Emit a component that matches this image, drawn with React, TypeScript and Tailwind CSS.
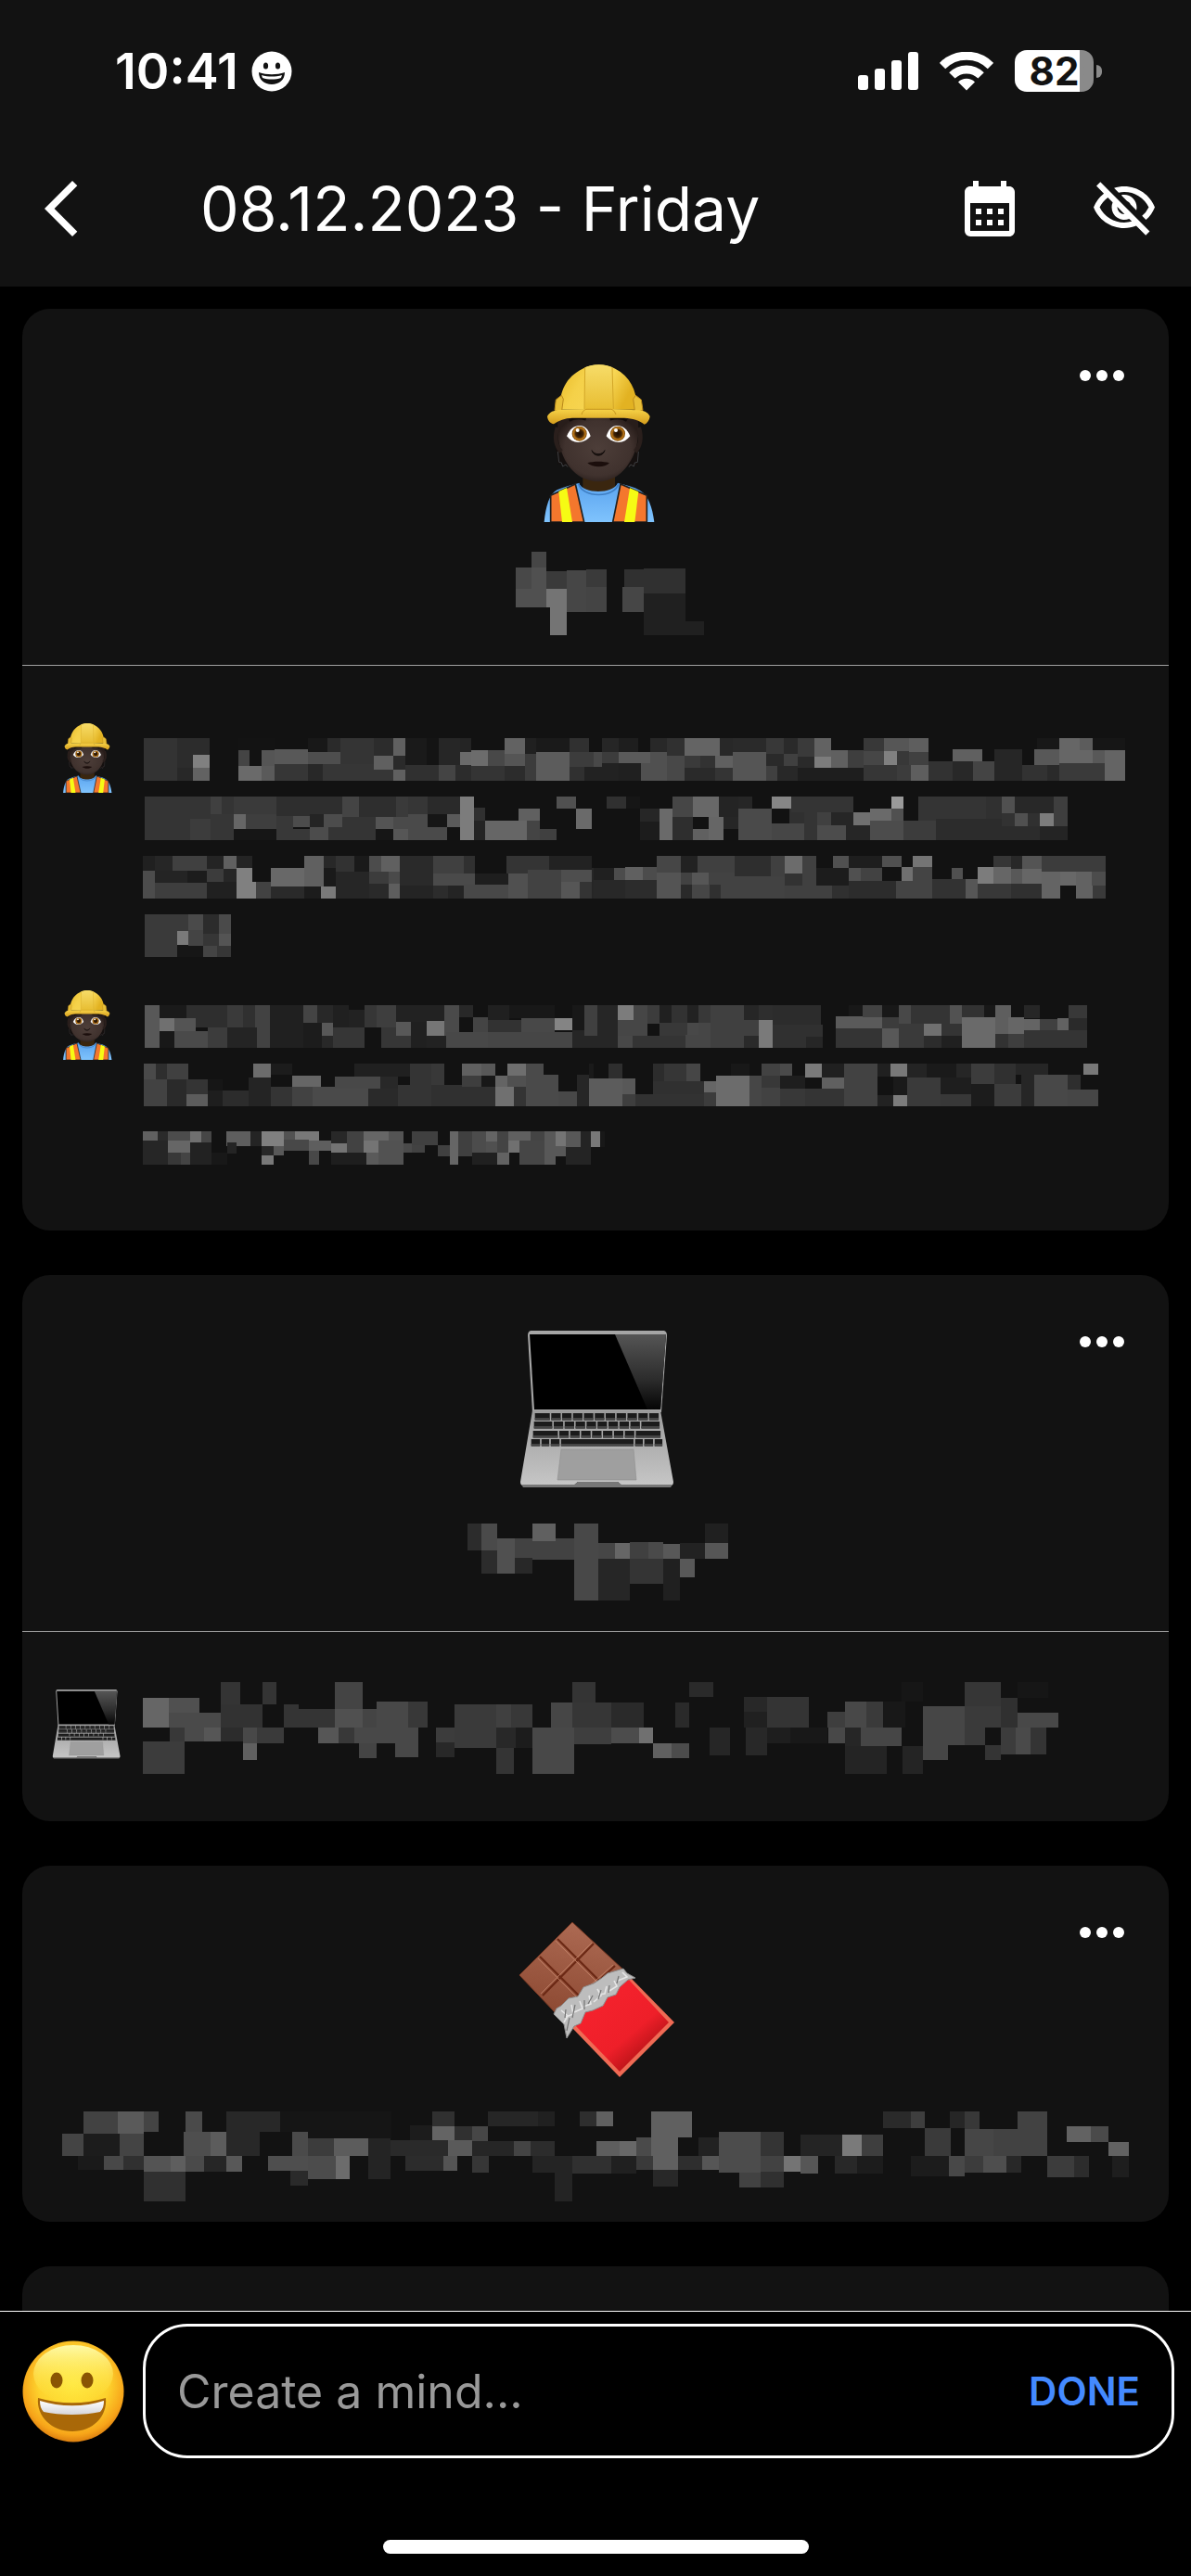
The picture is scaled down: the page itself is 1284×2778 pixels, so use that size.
import React, { useId } from 'react';
import { MdArrowBackIosNew, MdCalendarMonth, MdOutlineVisibilityOff } from 'react-icons/md';

/* ---------- Pixelated (censored) text ---------- */

// Cells are "x1 y1 x2 y2 grey", in the units of their part's grid.
type Part = { x: number; y: number; sx: number; cells: string };

function Mosaic({ viewBox, parts, className, label }: { viewBox: string; parts: Part[]; className: string; label: string }) {
  return (
    <svg viewBox={viewBox} className={className} shapeRendering="crispEdges" role="img" aria-label={label}>
      {parts.map((part, i) => (
        <g key={i} transform={`translate(${part.x} ${part.y}) scale(${part.sx} 0.33333)`}>
          {part.cells.split(';').map((cell, j) => {
            const [x1, y1, x2, y2, g] = cell.trim().split(' ');
            return <rect key={j} x={x1} y={y1} width={+x2 - +x1} height={+y2 - +y1} fill={`#${g}${g}${g}`} />;
          })}
        </g>
      ))}
    </svg>
  );
}

const NOTE_1_LEFT =
  '368 108 454 246 33;454 108 537 205 2c;454 205 494 246 28;494 162 537 205 80;494 205 537 246 62;611 108 703 148 13;611 148 639 198 44;611 198 670 246 6a;670 148 703 198 55;670 198 703 246 5a;703 144 789 192 58;789 153 872 192 4e;703 192 789 246 36;789 192 827 246 28;827 192 957 246 36;789 108 839 153 18;839 108 872 153 2a;872 108 957 192 34;957 108 1007 165 2c;957 165 1007 210 60;957 210 1007 246 36;1007 108 1038 165 60;1007 165 1038 210 2a;1007 210 1038 246 60;1038 108 1093 195 1a;1093 108 1124 195 14;1038 195 1124 246 30;1124 108 1178 195 26;1124 195 1166 246 44;1166 195 1207 246 2c;1178 108 1207 153 24;1178 153 1207 195 6a;1207 147 1250 198 6c;1207 198 1292 246 34;1250 147 1292 198 48;1292 108 1345 158 62;1292 158 1345 198 55;1292 198 1345 246 2c;1345 108 1373 158 20;1345 158 1373 246 3c;1373 108 1459 153 1a;1373 153 1459 246 5c;1459 108 1509 153 30;1459 153 1520 201 3c;1459 201 1497 246 30;1497 201 1520 246 22;' +
  '371 297 540 438 34;540 297 568 354 40;540 354 599 438 36;568 297 599 354 34;487 369 540 438 3c;599 297 708 354 3a;599 354 630 402 66;630 354 708 402 3e;599 402 708 438 16;708 297 877 360 2e;708 360 751 402 38;751 360 794 396 4c;794 354 829 396 24;829 354 877 396 4c;708 402 794 438 38;794 396 841 438 4c;841 396 962 438 34;877 297 919 363 44;877 363 962 396 34;919 297 1014 363 2e;1014 297 1045 363 3a;962 363 1007 402 54;1007 363 1045 402 4a;962 402 1007 438 16;1007 402 1045 438 56;1045 354 1095 438 4a;1045 297 1095 354 36;1095 297 1178 354 2a;1095 354 1145 396 16;1095 396 1145 438 4a;1145 354 1178 396 5a;1145 396 1178 438 12;1178 297 1214 438 7c;1214 333 1243 375 30;1214 375 1243 438 24;1243 375 1349 438 66;1328 336 1383 375 60;1349 375 1383 438 44;1383 402 1425 438 40;1425 297 1475 336 50;1475 336 1516 402 6a;' +
  '366 489 397 537 20;366 537 397 627 4c;397 489 442 537 26;397 537 480 576 24;480 537 530 576 1c;397 576 530 627 3e;442 489 530 537 40;530 489 573 531 24;530 531 573 573 3c;530 573 606 627 20;573 489 606 531 60;573 531 606 573 26;606 489 646 528 24;606 528 646 627 80;646 573 656 627 80;656 573 694 627 42;694 528 779 588 68;694 588 779 627 2a;779 489 829 588 60;779 588 822 627 1c;822 588 860 627 7a;829 489 860 528 28;829 528 860 588 1a;860 489 908 540 32;908 489 946 540 1a;860 540 946 627 26;946 489 976 540 4c;976 489 1024 540 60;946 540 995 579 3c;995 540 1024 579 4a;946 579 995 627 2a;995 579 1024 627 5e;1024 489 1109 585 2a;1024 585 1109 627 24;1109 489 1188 546 40;1188 489 1216 546 30;1109 546 1216 585 4a;1109 585 1147 627 2c;1147 585 1188 627 24;1188 582 1302 627 48;1216 546 1302 582 1e;1297 489 1406 546 34;1302 546 1352 627 50;1352 534 1437 627 42;1406 489 1516 534 22;1437 534 1516 573 4e;1437 573 1485 627 56;1485 573 1516 627 34;1516 528 1520 627 26;' +
  '371 678 482 816 3a;454 732 482 777 7a;454 777 520 816 16;482 678 520 729 4a;482 729 520 780 44;520 678 561 741 2c;520 741 561 780 36;520 780 556 816 44;561 678 592 741 4a;561 741 592 780 54;556 780 592 816 36';

const NOTE_1_RIGHT =
  '0 153 22 201 48;22 108 66 153 26;22 153 66 189 3c;66 108 117 153 1e;66 153 149 189 5a;0 201 66 246 22;22 189 124 201 22;66 189 124 246 20;124 189 192 246 50;149 108 192 153 28;149 153 192 189 50;192 108 239 165 30;192 165 239 246 48;239 108 331 165 64;239 165 280 204 3a;280 165 319 204 32;319 165 365 204 60;239 204 319 246 2a;319 204 365 246 34;331 108 365 165 28;365 108 453 153 2a;365 153 453 246 55;453 108 499 158 38;453 158 499 198 2a;453 198 482 246 40;482 198 536 246 28;499 108 536 158 2a;499 158 536 198 40;536 108 579 168 3a;536 168 579 204 2a;579 108 623 168 62;579 168 623 204 7c;623 147 667 204 60;667 147 709 204 3e;536 204 709 246 1e;709 108 762 150 38;709 150 762 195 46;762 108 828 150 56;762 150 796 195 80;828 108 879 153 5e;796 150 828 195 38;828 153 879 195 40;709 195 796 246 36;796 195 833 246 3c;833 195 879 246 5e;879 183 942 246 32;942 144 1020 183 60;942 183 996 246 28;996 183 1052 246 44;1052 144 1125 246 26;1125 195 1190 246 32;1190 195 1222 246 2a;1157 144 1222 195 58;1164 108 1222 144 18;1222 108 1275 189 66;1275 108 1310 147 5c;1275 147 1310 189 66;1310 147 1342 189 58;1342 147 1395 246 64;1222 189 1342 246 3a;1310 108 1395 147 16;' +
  '34 297 85 336 30;85 297 122 336 16;122 336 173 378 26;122 378 173 438 1c;173 336 207 438 6a;207 297 261 363 46;207 363 261 438 2e;261 297 329 363 68;302 363 341 438 66;261 402 302 438 60;329 297 380 363 24;341 363 380 402 26;380 297 416 336 26;380 336 467 438 4a;467 297 519 336 86;467 384 553 438 46;514 336 553 384 30;519 297 682 348 34;553 336 587 438 34;587 348 623 390 40;623 348 682 390 26;587 390 662 438 4c;662 390 726 438 26;682 348 726 390 70;726 336 782 375 6a;782 297 813 336 9a;782 336 813 375 50;726 375 813 438 4c;813 375 898 438 3c;852 297 1030 375 34;898 370 1170 438 2c;1030 297 1071 370 30;1071 297 1105 351 50;1071 351 1105 393 32;1105 351 1139 393 50;1105 297 1210 351 28;1139 351 1171 393 30;1171 351 1208 393 7c;1171 393 1244 438 24;1208 297 1244 393 3e;' +
  '0 528 54 567 20;54 528 83 567 4c;83 525 129 567 60;129 525 166 567 4c;0 567 83 627 28;83 567 166 627 2c;166 489 229 543 46;166 543 229 627 54;229 489 273 543 22;229 543 258 582 42;229 582 258 627 2a;258 543 302 582 56;258 582 304 627 46;273 489 370 543 40;302 543 370 582 42;304 582 334 627 30;334 555 502 627 42;370 489 465 555 2e;465 489 502 555 40;502 489 548 546 6c;502 546 548 585 32;548 489 584 585 40;502 585 626 627 40;584 528 670 585 1c;626 585 670 627 30;628 489 670 528 50;670 489 757 528 1e;670 528 701 570 50;701 528 757 570 42;670 570 794 627 2c;757 489 808 525 50;808 525 838 570 70;838 489 889 525 74;838 525 889 627 44;794 570 838 627 44;889 564 976 627 32;940 528 969 564 50;976 564 1008 627 56;1008 525 1049 579 7c;1049 489 1096 525 36;1049 525 1096 579 66;1096 489 1125 531 28;1096 531 1125 579 58;1125 489 1176 531 54;1125 531 1176 579 66;1008 579 1096 627 38;1096 579 1176 627 30;1176 489 1344 543 3c;1176 540 1225 627 64;1225 540 1266 585 68;1266 540 1310 627 62;1307 540 1344 585 4c;1310 585 1344 627 3a';

const NOTE_2_LEFT =
  '371 102 409 240 58;409 144 447 186 70;409 102 478 144 1a;447 144 501 186 54;409 186 447 240 18;447 186 532 240 4a;478 102 582 144 2e;501 144 582 174 2e;532 174 582 240 3c;582 102 622 174 3a;622 102 653 174 30;653 102 691 240 42;582 174 658 240 24;691 102 777 240 20;777 102 813 159 44;813 102 853 159 28;777 159 824 240 1c;824 159 853 201 58;824 201 853 240 28;853 102 893 174 20;853 174 934 240 36;893 118 934 174 22;934 102 965 174 36;965 102 1014 174 3e;976 174 1014 240 36;1014 102 1138 156 22;1014 156 1052 201 58;1014 201 1052 240 36;1052 156 1093 240 20;1093 153 1140 201 76;1093 201 1143 240 22;1138 102 1176 201 4a;1143 189 1250 240 48;1176 102 1212 141 28;1212 141 1250 189 44;1250 102 1304 150 20;1250 150 1335 189 32;1304 102 1421 144 18;1335 144 1421 189 48;1250 189 1466 240 46;1421 144 1466 183 84;1466 183 1520 240 26;1466 102 1497 183 18;1497 102 1520 201 40;' +
  '368 291 399 342 4a;399 291 428 342 2e;428 291 482 342 40;368 342 428 429 42;428 342 478 429 2a;478 342 532 390 34;478 390 532 429 5c;532 342 570 378 16;532 378 570 429 1e;570 378 637 429 2c;637 336 694 429 24;649 291 694 336 6c;694 291 748 327 1c;694 366 748 429 34;748 330 822 366 66;748 366 801 429 42;801 366 943 429 4a;858 333 974 372 48;908 291 1050 333 20;974 333 1019 372 28;943 372 1019 429 2a;1019 360 1104 429 34;1050 291 1104 360 34;1104 291 1138 360 38;1104 360 1269 429 30;1183 291 1233 330 60;1233 291 1269 330 58;1183 330 1233 366 3e;1233 330 1269 366 18;1269 330 1300 366 64;1269 366 1316 429 70;1300 291 1347 330 6e;1300 330 1347 366 50;1316 366 1347 429 34;1347 291 1392 429 4a;1392 327 1430 429 4a;1430 381 1478 429 48;1478 327 1509 429 26;1509 291 1520 339 1a;1509 339 1520 429 5c;' +
  '366 510 404 540 60;404 510 430 540 2a;366 540 430 618 26;430 510 487 540 4c;430 540 487 579 66;430 579 463 618 38;463 579 487 618 44;487 510 516 546 70;516 510 542 546 46;487 546 542 618 22;542 579 582 618 18;580 510 641 558 5e;582 546 606 582 24;641 510 670 558 24;670 510 727 558 80;670 558 701 588 28;670 588 701 618 78;701 558 727 588 58;727 510 755 537 52;755 510 817 540 78;727 537 791 573 48;791 540 848 573 5e;791 573 817 618 48;848 510 889 549 28;848 549 889 579 74;848 579 938 618 1e;889 510 931 579 42;931 510 995 540 66;931 540 969 579 74;938 579 969 618 5a;969 540 1033 618 52;995 510 1033 540 54;1033 549 1055 579 4a;1055 510 1121 555 40;1055 555 1088 579 42;1121 555 1152 591 40;1152 510 1174 618 66;1174 510 1209 591 40;1209 510 1245 579 4c;1209 579 1273 618 20;1245 510 1273 543 64;1245 543 1273 579 50;1273 510 1302 579 44;1273 579 1304 618 62;1302 510 1359 540 60;1302 540 1330 579 70;1330 540 1395 618 46;1359 510 1395 540 44;1395 510 1423 618 58;1423 510 1449 558 74;1423 558 1449 591 58;1449 510 1487 561 58;1449 561 1513 618 24;1487 510 1513 561 24;1513 510 1537 561 78;1537 510 1550 561 18';

const NOTE_2_RIGHT =
  '0 102 10 201 40;0 201 10 240 26;10 102 63 240 26;63 102 105 150 7c;105 102 141 201 46;63 150 141 201 46;63 201 102 240 48;102 201 241 240 34;141 102 173 162 3c;173 102 205 159 20;205 102 246 159 32;246 102 275 159 22;173 159 246 201 38;246 159 275 201 48;241 198 275 240 46;275 102 307 159 38;275 159 307 240 46;307 102 394 240 40;394 102 433 150 26;394 150 433 201 40;394 201 433 240 2a;433 102 470 150 2e;433 150 470 240 7a;470 102 597 165 2c;470 165 601 240 30;558 204 601 240 26;635 138 757 177 5a;706 102 757 141 42;670 102 706 138 18;635 177 757 240 34;757 102 801 141 18;757 141 801 177 3c;757 177 801 240 58;801 102 833 162 48;833 102 935 162 34;801 162 867 240 3a;867 162 913 201 70;867 201 913 240 2c;913 162 967 201 34;913 201 967 240 20;935 102 967 162 52;967 102 1025 141 32;967 141 1054 240 6a;1025 102 1054 141 18;1054 102 1096 195 5e;1088 141 1130 195 66;1054 195 1088 240 32;1088 195 1130 240 3e;1130 102 1170 144 26;1130 147 1170 183 64;1130 183 1295 240 34;1170 147 1217 183 40;1217 144 1247 183 62;1247 102 1295 144 38;1247 144 1295 183 2a;' +
  '0 339 75 429 5c;39 291 75 339 2e;75 339 110 390 58;75 390 110 429 3e;110 390 290 429 32;156 291 186 348 2c;156 348 290 390 30;186 291 243 348 36;243 291 280 348 46;290 348 321 384 66;290 384 321 429 3c;321 330 409 429 6c;409 330 441 429 46;360 291 409 330 18;441 291 489 330 42;441 330 489 369 38;489 291 521 330 4a;489 330 555 372 1e;441 369 489 429 42;489 372 555 429 38;555 291 599 336 7a;599 291 657 336 20;599 336 657 372 60;555 372 657 429 34;657 291 745 429 42;745 291 779 333 20;779 291 823 333 78;786 333 823 393 1a;745 393 786 429 22;786 393 823 429 7c;823 291 874 336 24;823 336 911 429 3a;874 291 952 336 1a;911 336 991 390 1e;911 390 991 429 38;952 291 991 336 26;991 291 1052 357 3c;991 357 1052 429 1c;1052 291 1108 357 30;1052 357 1122 429 3c;1108 291 1193 327 26;1122 327 1157 429 26;1157 327 1244 429 48;1244 327 1278 375 2e;1244 375 1325 429 46;1286 291 1325 327 78';

const NOTE_3 =
  '188 153 222 249 66;222 153 263 201 50;222 201 291 249 4a;291 102 316 174 34;291 174 346 249 32;346 102 364 174 34;374 174 393 249 34;393 189 441 249 34;441 102 477 189 44;441 189 477 249 50;477 189 496 249 44;496 165 537 249 48;537 165 563 249 38;223 249 243 294 38;243 249 269 294 4a;269 249 291 294 56;291 249 320 294 2c;320 249 338 300 48;338 249 374 300 3a;188 294 243 399 3c;320 300 338 354 60;419 249 446 300 56;446 249 466 300 38;466 249 520 300 48;473 300 496 348 44;520 249 551 345 48;574 249 598 297 3c;574 297 598 345 28;598 174 653 315 3a;653 174 673 249 40;673 174 701 249 38;653 249 679 315 28;679 249 701 315 1c;653 315 677 399 34;701 249 756 399 48;725 168 753 249 46;753 102 784 168 34;753 168 805 249 36;805 168 848 249 2a;756 249 805 303 3e;805 249 841 300 4c;841 249 860 300 70;860 300 884 348 60;884 300 907 348 4c;889 168 907 249 2a;907 102 939 150 2a;934 249 961 339 26;979 150 1010 198 28;979 198 1010 249 20;982 249 1010 339 28;1010 150 1065 249 34;1010 249 1040 300 1e;1040 249 1089 300 18;1089 198 1112 249 3e;1091 249 1112 300 48;1112 165 1141 249 48;1141 165 1163 249 3a;1163 165 1192 249 18;1187 102 1215 165 16;1112 249 1133 309 26;1133 249 1187 309 46;1112 309 1167 399 24;1188 309 1215 399 24;1215 180 1248 354 46;1248 180 1270 306 46;1270 102 1318 180 36;1270 180 1297 306 3a;1297 180 1318 249 3a;1318 153 1340 249 30;1340 201 1393 249 48;1340 102 1380 153 16;1297 306 1318 354 34;1318 249 1337 336 3c;1337 249 1357 336 4a;1357 249 1377 336 34';

const TITLE_1 =
  '99 675 147 726 46;48 726 99 795 48;99 726 147 855 50;48 795 99 855 50;147 738 213 795 3a;147 795 213 855 74;159 855 213 945 74;213 735 276 870 46;276 732 342 789 3a;276 789 342 870 44;399 732 462 789 30;393 789 462 870 46;462 729 597 810 30;462 810 597 945 20;597 900 657 945 20';

const TITLE_2 =
  '47 819 76 906 2c;76 819 109 906 4a;76 906 109 981 2c;109 867 146 981 50;146 867 271 936 42;146 930 183 981 28;183 819 232 876 60;271 819 322 1068 48;322 882 357 933 46;357 882 388 933 66;322 933 388 1068 26;388 879 427 933 40;427 879 458 933 4a;388 933 458 1014 34;458 885 493 933 58;458 933 493 1068 20;493 882 546 933 22;493 933 525 993 58;546 819 595 882 20;546 882 595 933 56';

const TITLE_3 =
  '110 111 155 183 42;155 111 189 183 5a;189 111 209 178 44;82 183 110 255 44;110 183 158 255 1c;158 183 189 255 44;103 255 137 300 1a;137 255 162 300 48;162 255 189 300 30;189 255 225 306 54;225 255 244 306 5e;189 306 244 402 30;244 111 266 177 4a;242 177 277 255 4e;277 177 298 255 5c;244 255 269 306 4a;269 255 298 306 26;298 255 319 306 58;298 111 369 177 28;298 177 342 255 28;369 111 515 177 15;405 177 515 198 15;385 177 405 255 4a;405 198 440 255 3c;440 198 485 255 5c;485 198 514 330 24;353 255 405 303 4e;405 255 442 330 4c;442 255 460 330 6c;382 303 405 351 2a;514 204 590 255 2a;540 156 569 204 1c;569 111 598 159 30;569 159 598 204 64;598 159 622 204 30;622 159 642 207 46;590 204 622 255 5a;534 255 584 303 2c;584 255 602 303 54;622 255 644 309 36;642 111 708 159 26;708 111 730 159 20;622 207 677 255 26;677 207 699 255 44;699 207 730 255 2c;701 255 730 309 24;730 255 753 402 24;753 255 805 312 30;805 255 838 312 20;763 111 785 159 2e;785 111 807 159 60;785 207 816 255 5e;816 207 838 255 68;838 195 857 255 4a;857 111 911 195 60;857 195 893 300 60;838 255 860 300 3a;860 300 893 354 28;893 255 924 300 2e;920 195 946 255 22;924 255 946 300 56;946 177 1001 309 4c;1001 177 1032 255 34;1001 255 1032 306 42;973 309 1001 357 42;1001 306 1032 357 30;1032 255 1054 306 74;1054 255 1077 312 56;1054 186 1109 255 24;1109 186 1134 255 7a;1134 186 1163 255 3e;1099 255 1128 312 28;1128 255 1163 312 1c;1163 111 1199 165 2a;1199 111 1218 165 3e;1218 165 1252 255 3a;1250 111 1270 165 26;1270 111 1290 168 38;1270 168 1308 255 46;1308 168 1379 255 42;1340 111 1379 168 42;1199 255 1249 321 1c;1249 255 1270 321 48;1270 255 1294 309 3c;1294 255 1325 309 4e;1325 255 1345 309 28;1379 255 1414 324 3c;1414 255 1434 324 2c;1404 159 1436 210 62;1436 159 1459 210 4a;1459 210 1486 255 62;1464 255 1486 324 1e';

/* ---------- Emoji drawings ---------- */

type IconProps = { className: string };

function Worker({ className }: IconProps) {
  const id = useId();
  const u = (n: string) => `url(#${id}${n})`;
  return (
    <svg viewBox="52 68 510 510" className={className} role="img" aria-label="Construction worker">
      <defs>
        <linearGradient id={id + 'hat'} x1="0" x2="1" y1="0" y2="0.3">
          <stop offset="0" stopColor="#e8b926" />
          <stop offset="0.35" stopColor="#f5d149" />
          <stop offset="0.7" stopColor="#f7d654" />
          <stop offset="1" stopColor="#e2b222" />
        </linearGradient>
        <linearGradient id={id + 'mid'} x1="0" x2="0" y1="0" y2="1">
          <stop offset="0" stopColor="#f7dc68" />
          <stop offset="1" stopColor="#e6ba2c" />
        </linearGradient>
        <linearGradient id={id + 'brim'} x1="0" x2="0" y1="0" y2="1">
          <stop offset="0" stopColor="#f7d348" />
          <stop offset="1" stopColor="#d49c1c" />
        </linearGradient>
        <radialGradient id={id + 'face'} cx="0.5" cy="0.5" r="0.55">
          <stop offset="0" stopColor="#4d3e39" />
          <stop offset="0.75" stopColor="#40322e" />
          <stop offset="1" stopColor="#281d1a" />
        </radialGradient>
        <linearGradient id={id + 'shirt'} x1="0" x2="0" y1="0" y2="1">
          <stop offset="0" stopColor="#5ba4ef" />
          <stop offset="1" stopColor="#7fc3fd" />
        </linearGradient>
        <radialGradient id={id + 'iris'}>
          <stop offset="0" stopColor="#1c0d02" />
          <stop offset="0.5" stopColor="#3f2304" />
          <stop offset="0.8" stopColor="#c07a17" />
          <stop offset="1" stopColor="#6b3f07" />
        </radialGradient>
      </defs>
      <path d="M183 235h264c8 55 4 110-4 160l-30 4H218l-32-10c-10-50-10-100-3-154z" fill="#15100f" />
      <path d="M185 350l4 34 8 2 4 12 10-6 6 8M446 350l-3 34-9 2-3 12-10-6-6 8" fill="none" stroke="#3d3f42" strokeWidth="3" />
      <path d="M266 425h104v45c-20 24-84 24-104 0z" fill="#3a260f" />
      <path d="M141 578c5-50 17-92 42-104 24-11 48-16 70-22 16 36 110 36 126 0 26 6 52 12 72 24 26 14 40 54 46 102z" fill={u('shirt')} />
      <path d="M252 452c10 50 120 50 130 0" fill="none" stroke="#3f7fc4" strokeWidth="5" />
      <path d="M162 492l80-37 28 123H162z" fill="#f4772d" stroke="#202020" strokeWidth="5" />
      <path d="M188 479l26-12 18 111h-33z" fill="#f6fb14" />
      <path d="M473 492l-85-37-25 123h110z" fill="#f4772d" stroke="#202020" strokeWidth="5" />
      <path d="M446 480l-28-12-18 110h34z" fill="#f6fb14" />
      <path d="M188 232h254c10 60 0 118-28 158-22 34-56 57-98 57s-78-23-100-57c-27-42-38-98-28-158z" fill={u('face')} />
      <path d="M184 272c-10 30-6 60 12 78M447 272c10 30 6 60-12 78" fill="none" stroke="#2a1f1c" strokeWidth="14" />
      <path d="M222 250c14-9 34-10 54-4M408 250c-14-9-34-10-54-4" fill="none" stroke="#120c0b" strokeWidth="8" />
      <path d="M214 300c10-24 24-34 42-34 17 0 28 12 35 34-12 14-25 20-40 20s-27-7-37-20z" fill="#fff" />
      <path d="M419 300c-10-24-24-34-42-34-17 0-28 12-35 34 12 14 25 20 40 20s27-7 37-20z" fill="#fff" />
      <circle cx="255" cy="292" r="24" fill={u('iris')} />
      <circle cx="379" cy="292" r="24" fill={u('iris')} />
      <circle cx="249" cy="281" r="6" fill="#fff" />
      <circle cx="373" cy="281" r="6" fill="#fff" />
      <path d="M295 346c8 16 34 16 42 0-6 22-36 22-42 0z" fill="#17100e" stroke="#17100e" strokeWidth="3" />
      <path d="M281 387c20-6 50-6 71 0-14 16-54 16-71 0z" fill="#1b0e0c" />
      <path d="M191 214c0-60 20-105 74-132 30-18 76-18 106 0 50 26 72 74 69 132z" fill={u('hat')} />
      <path d="M273 78c24-12 66-12 88 0l4 150h-94z" fill={u('mid')} />
      <path d="M273 78l-2 134M361 78l4 134" stroke="#d3a728" strokeWidth="3" fill="none" />
      <path d="M175 216l4-34 18-14 6 12-6 44zM460 216l-5-34-18-14-8 12 6 44z" fill="#e8bf38" stroke="#b9881a" strokeWidth="3" />
      <path d="M151 236c8-14 20-20 42-21l76-2h96l76 3c22 1 36 7 42 20-2 14-10 24-18 26-14-13-40-20-64-21H232c-24 1-44 8-60 20-12-2-20-12-21-25z" fill={u('brim')} />
      <path d="M262 230c4-12 10-17 18-17h76c8 0 12 6 17 17" fill="none" stroke="#c4941d" strokeWidth="3" />
    </svg>
  );
}

const KEY_ROWS = [
  { x: 18, y: 89, w: 135, keys: [15, 10, 10, 10, 10, 10, 10, 10, 10, 10, 10] },
  { x: 17, y: 98, w: 137, keys: [18, 10, 10, 10, 10, 10, 10, 10, 10, 18] },
  { x: 16, y: 108, w: 139, keys: [24, 10, 10, 10, 10, 10, 10, 10, 24] },
  { x: 14, y: 117, w: 143, keys: [10, 9, 10, 72, 9, 10, 9] },
];

function Laptop({ className }: IconProps) {
  const id = useId();
  return (
    <svg viewBox="-1 0 170 170" className={className} role="img" aria-label="Laptop">
      <defs>
        <linearGradient id={id + 'base'} x1="0" x2="0" y1="0" y2="1">
          <stop offset="0" stopColor="#9c9c9c" />
          <stop offset="1" stopColor="#c6c6c6" />
        </linearGradient>
        <linearGradient id={id + 'glare'} x1="0" x2="0" y1="0" y2="1">
          <stop offset="0" stopColor="#555" />
          <stop offset="0.6" stopColor="#2c2c2c" />
          <stop offset="1" stopColor="#050505" />
        </linearGradient>
      </defs>
      <path d="M14 0h144q3 1 3 5l-6 83H16L11 5q0-4 3-5z" fill="#a5a5a5" />
      <path d="M13 4h147l-6 81H18z" fill="#000" />
      <path d="M105 4h55l-6 81h-14z" fill={`url(#${id}glare)`} />
      <path d="M16 86h138l14 77q0 4-3 4h-53l-4-4H65l-4 4H6q-3 0-3-4z" fill={`url(#${id}base)`} />
      <path d="M4 166h57l4-3h43l4 3h55l-2 3H6z" fill="#777" />
      {KEY_ROWS.map((row) => {
        const total = row.keys.reduce((a, b) => a + b, 0);
        let at = row.x;
        return row.keys.map((key, i) => {
          const w = (key / total) * row.w;
          const x = at;
          at += w;
          return (
            <g key={i}>
              <rect x={x + 0.7} y={row.y} width={w - 1.6} height="7.5" fill="#1b1b1b" />
              <rect x={x + 0.7} y={row.y + 5} width={w - 1.6} height="2.5" fill="#444" />
            </g>
          );
        });
      })}
      <path d="M47 128h78l3 33H43z" fill="#9f9f9f" stroke="#8e8e8e" strokeWidth="0.6" />
    </svg>
  );
}

function Chocolate({ className }: IconProps) {
  const id = useId();
  return (
    <svg viewBox="-1 0 170 170" className={className} role="img" aria-label="Chocolate bar">
      <defs>
        <linearGradient id={id + 'choc'} x1="0.6" x2="0.4" y1="0" y2="1">
          <stop offset="0" stopColor="#ad6a53" />
          <stop offset="1" stopColor="#8d4a33" />
        </linearGradient>
        <linearGradient id={id + 'red'} x1="0.2" x2="0.8" y1="0.2" y2="0.9">
          <stop offset="0" stopColor="#f5222d" />
          <stop offset="0.6" stopColor="#ee1f29" />
          <stop offset="1" stopColor="#a80f12" />
        </linearGradient>
      </defs>
      <path d="M59 1L2 58l40 42 74-46z" fill={`url(#${id}choc)`} stroke="#7d3b24" strokeWidth="1" />
      <path d="M43 19l48 48M24 38l45 45M82 24L27 80M105 48L68 82" stroke="#6b2814" strokeWidth="2.2" fill="none" />
      <path d="M41 21l48 48M22 40l45 45M80 23L25 78M103 47L66 80" stroke="#c08067" strokeWidth="0.9" fill="none" />
      <path d="M122 61l47 48-59 59-51-53 20-26z" fill="#ef6a54" />
      <path d="M120 63l43 46-53 53-48-50 20-26z" fill={`url(#${id}red)`} />
      <path d="M114 51l4 5 9 5-8 2-9 8-4 8-9 3-5 9-11 5-8 2-5 12-7 3-8 13-3-15-11-11 3-6 5-3 8-8 10-2 6-10 11-4 9-6 6-5z" fill="#bdbdbd" stroke="#8d8d8d" strokeWidth="1" />
      <path d="M113 55l5 5-10 4M104 64l3 6-8 5M96 70l-2 8-7 1M86 73l4 7-8 7M77 80l2 9-8 3M67 86l3 8-9 4M58 90l2 10-8 3M47 96l7 6-4 7" stroke="#e6e6e6" strokeWidth="1.6" fill="none" />
      <path d="M109 59l-2 8M99 69l-1 8M90 74l-3 10M81 80l-5 9M72 85l0 10M62 90l-3 14M52 95l-1 9M56 104l-3 14" stroke="#747474" strokeWidth="1.2" fill="none" />
    </svg>
  );
}

function Smile({ className }: IconProps) {
  const id = useId();
  return (
    <svg viewBox="0 0 110 110" className={className} aria-hidden="true">
      <defs>
        <radialGradient id={id + 'f'} cx="0.5" cy="0.42" r="0.58">
          <stop offset="0" stopColor="#ffe83c" />
          <stop offset="0.6" stopColor="#fdd22d" />
          <stop offset="0.88" stopColor="#f7a419" />
          <stop offset="1" stopColor="#dc7f10" />
        </radialGradient>
        <linearGradient id={id + 'h'} x1="0" x2="0" y1="0" y2="1">
          <stop offset="0" stopColor="#fdfaa8" />
          <stop offset="0.5" stopColor="#fff06a" stopOpacity="0.5" />
          <stop offset="1" stopColor="#ffe63c" stopOpacity="0" />
        </linearGradient>
        <linearGradient id={id + 't'} x1="0" x2="0" y1="0" y2="1">
          <stop offset="0" stopColor="#fff" />
          <stop offset="1" stopColor="#d5d5da" />
        </linearGradient>
      </defs>
      <circle cx="55" cy="55" r="54.5" fill={`url(#${id}f)`} />
      <ellipse cx="55" cy="36" rx="43" ry="31" fill={`url(#${id}h)`} />
      <ellipse cx="37" cy="43" rx="6.5" ry="8.5" fill="#8a5503" />
      <ellipse cx="70" cy="43" rx="6.5" ry="8.5" fill="#8a5503" />
      <path d="M17 62c24 7 50 7 73 0 2 20-14 36-36 36S15 82 17 62z" fill="#a96808" />
      <path d="M19 65c22 7 48 7 69 0 0 5-1 9-4 12-18 4-43 4-61 0-3-3-4-7-4-12z" fill={`url(#${id}t)`} />
    </svg>
  );
}

/* ---------- Page parts ---------- */

function StatusBar() {
  return (
    <div className="flex h-[141px] items-center justify-between pt-3 pr-24 pl-[124px]">
      <div className="flex items-center gap-[14px]">
        <span className="text-[54px] leading-[60px] font-semibold">10:41</span>
        <svg viewBox="0 0 44 44" className="size-11" aria-hidden="true">
          <circle cx="22" cy="22" r="21.5" fill="#fff" />
          <ellipse cx="15.500" cy="16" rx="2.600" ry="3.600" fill="#121212" />
          <ellipse cx="28.500" cy="16" rx="2.600" ry="3.600" fill="#121212" />
          <path d="M8 23c9 3 19 3 28 0 0 8-6 13-14 13S8 31 8 23z" fill="#121212" />
          <path d="M11 26c7 2 15 2 22 0l-1 3c-6 2-14 2-20 0z" fill="#fff" />
        </svg>
      </div>
      <div className="flex items-center gap-[23px]">
        <svg viewBox="0 0 65 42" className="h-[42px] w-[65px]" fill="#fff" aria-hidden="true">
          <rect x="0" y="25" width="11" height="16" rx="3" />
          <rect x="18" y="18" width="11" height="23" rx="3" />
          <rect x="36" y="9" width="11" height="32" rx="3" />
          <rect x="54" y="0" width="11" height="41" rx="3" />
        </svg>
        <svg viewBox="0 0 58 42" className="h-[42px] w-[58px]" aria-hidden="true">
          <path d="M3 15A36.700 36.700 0 0 1 55 15M13.400 25.400A22 22 0 0 1 44.600 25.400" fill="none" stroke="#fff" strokeWidth="9" />
          <path d="M29 41.500L20 32.500A12.700 12.700 0 0 1 38 32.500Z" fill="#fff" />
        </svg>
        <div className="flex items-center gap-[3px]">
          <div className="flex h-[45px] w-[85px] items-center justify-center rounded-[13px] bg-linear-to-r from-white from-82% to-[#8a8a8a] to-82% text-[42px] leading-[45px] font-bold text-[#121212]">
            82
          </div>
          <div className="h-[14px] w-[6px] rounded-r-full bg-[#8a8a8a]" />
        </div>
      </div>
    </div>
  );
}

function Toolbar() {
  return (
    <div className="flex h-[168px] items-center pr-9 pl-[30px]">
      <button type="button" aria-label="Back" className="shrink-0">
        <MdArrowBackIosNew className="size-[72px]" />
      </button>
      <h1 className="ml-[114px] flex-1 text-[66px] leading-[76px] whitespace-nowrap">08.12.2023 - Friday</h1>
      <div className="flex shrink-0 gap-[73px]">
        <button type="button" aria-label="Open calendar">
          <MdCalendarMonth className="size-[72px]" />
        </button>
        <button type="button" aria-label="Hide content">
          <MdOutlineVisibilityOff className="size-[72px]" />
        </button>
      </div>
    </div>
  );
}

function Card({ icon, titleBox, title, children }: { icon: React.ReactNode; titleBox: string; title: Part; children?: React.ReactNode }) {
  return (
    <article className="relative shrink-0 rounded-[30px] bg-[#121212]">
      <header className="flex flex-col items-center pt-[60px]">
        {icon}
        <Mosaic viewBox={titleBox} parts={[title]} className="h-[154px] w-full" label="Hidden title" />
      </header>
      <button type="button" aria-label="More options" className="absolute top-[54px] right-[42px] flex h-9 items-center gap-[6px] px-[6px]">
        <span className="size-3 rounded-full bg-white" />
        <span className="size-3 rounded-full bg-white" />
        <span className="size-3 rounded-full bg-white" />
      </button>
      {children && <div className="flex flex-col gap-7 border-t border-[#a0a0a0] pt-[54px] pb-[50px]">{children}</div>}
    </article>
  );
}

function Note({ icon, children }: { icon: React.ReactNode; children: React.ReactNode }) {
  return (
    <div className="flex items-start gap-6 pl-[31px]">
      {icon}
      {children}
    </div>
  );
}

export default function App() {
  return (
    <div className="flex h-screen flex-col overflow-hidden bg-black font-[Inter,sans-serif] text-white">
      <div className="shrink-0 bg-[#121212]">
        <StatusBar />
        <Toolbar />
      </div>

      <main className="flex min-h-0 flex-1 flex-col gap-12 overflow-hidden px-6 pt-6">
        <Card icon={<Worker className="size-[170px]" />} titleBox="24 563 1236 154" title={{ x: 540, y: 370, sx: 0.3333, cells: TITLE_1 }}>
          <Note icon={<Worker className="mt-2 size-[75px] shrink-0" />}>
            <Mosaic
              viewBox="154 772 1060 260"
              className="h-[260px] w-[1060px] min-w-0"
              label="Hidden text"
              parts={[
                { x: 0, y: 760, sx: 0.4209, cells: NOTE_1_LEFT },
                { x: 640, y: 760, sx: 0.4107, cells: NOTE_1_RIGHT },
              ]}
            />
          </Note>
          <Note icon={<Worker className="mt-2 size-[75px] shrink-0" />}>
            <Mosaic
              viewBox="154 1060 1060 217"
              className="h-[217px] w-[1060px] min-w-0"
              label="Hidden text"
              parts={[
                { x: 0, y: 1050, sx: 0.4209, cells: NOTE_2_LEFT },
                { x: 640, y: 1050, sx: 0.4107, cells: NOTE_2_RIGHT },
              ]}
            />
          </Note>
        </Card>

        <Card icon={<Laptop className="size-[170px]" />} titleBox="24 1605 1236 154" title={{ x: 480, y: 1370, sx: 0.5128, cells: TITLE_2 }}>
          <Note icon={<Laptop className="mt-2 size-[75px] shrink-0" />}>
            <Mosaic
              viewBox="154 1814 1060 100"
              className="h-[100px] w-[1060px] min-w-0"
              label="Hidden text"
              parts={[{ x: 0, y: 1780, sx: 0.8189, cells: NOTE_3 }]}
            />
          </Note>
        </Card>

        <Card icon={<Chocolate className="size-[170px]" />} titleBox="24 2242 1236 154" title={{ x: 0, y: 2240, sx: 0.8189, cells: TITLE_3 }} />

        <article className="h-[384px] shrink-0 rounded-[30px] bg-[#121212]" />
      </main>

      <footer className="shrink-0 border-t border-white bg-black pt-[13px] pb-6">
        <form className="flex items-center gap-5 pr-[18px] pl-6" onSubmit={(e) => e.preventDefault()}>
          <button type="button" aria-label="Choose emoji" className="shrink-0">
            <Smile className="size-[110px]" />
          </button>
          <div className="flex h-[145px] min-w-0 flex-1 items-center rounded-[48px] border-3 border-white pr-[34px] pl-[34px]">
            <input
              type="text"
              aria-label="Create a mind"
              placeholder="Create a mind..."
              className="min-w-0 flex-1 bg-transparent text-[50px] leading-[60px] outline-none placeholder:text-[#999]"
            />
            <button type="submit" className="text-[42px] leading-[60px] font-semibold text-[#448aff]">
              DONE
            </button>
          </div>
        </form>
        <div className="mx-auto mt-22 h-[15px] w-[459px] rounded-full bg-white" />
      </footer>
    </div>
  );
}
